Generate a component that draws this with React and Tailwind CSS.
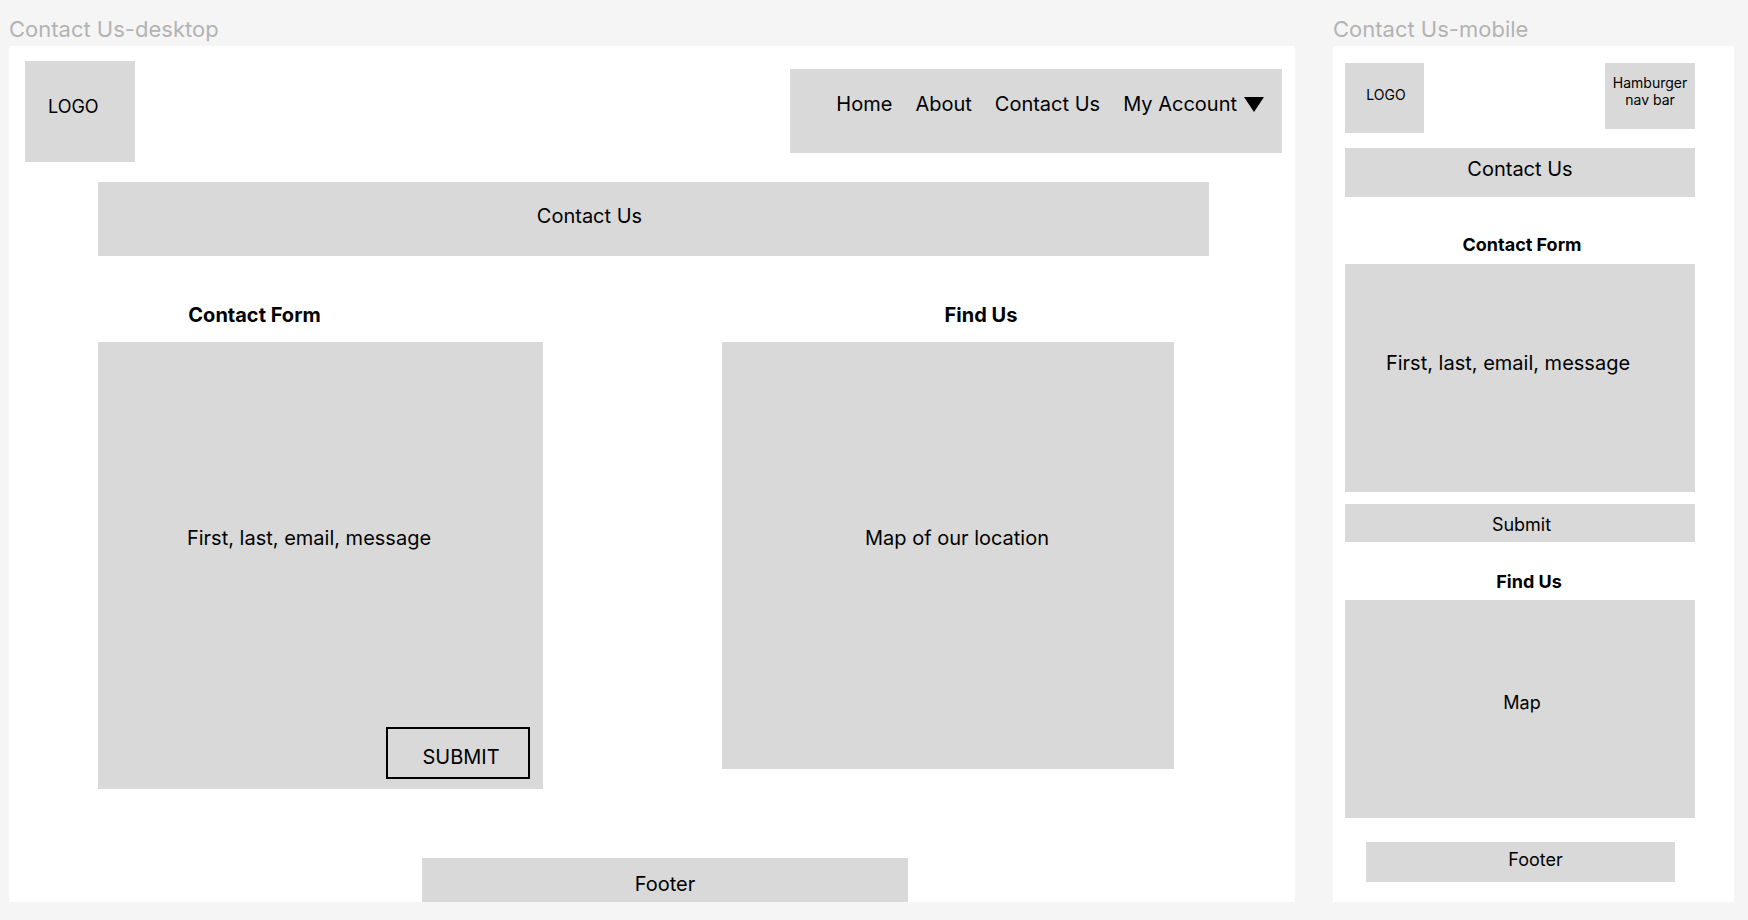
function FrameLabel({ children }) {
  return <p className="pt-[17px] text-[22px] leading-6 whitespace-nowrap text-[#b3b3b3]">{children}</p>;
}

function Desktop() {
  return (
    <section className="min-w-0 flex-1">
      <FrameLabel>Contact Us-desktop</FrameLabel>
      <div className="mt-[5px] bg-white text-xl leading-6">
        <header className="flex items-start justify-between pt-[15px] pr-[13px] pl-4">
          <div className="h-[101px] w-[110px] bg-[#d9d9d9] pt-[34px] pl-[23px] text-lg leading-6">LOGO</div>
          <nav className="mt-2 flex h-[84px] items-start gap-[23px] bg-[#d9d9d9] pt-[23px] pr-[18px] pl-[46px] whitespace-nowrap">
            <a href="#home">Home</a>
            <a href="#about">About</a>
            <a href="#contact">Contact Us</a>
            <button type="button" className="flex items-center gap-[7px]">
              My Account
              <svg className="h-[15px] w-5" viewBox="0 0 20 15" aria-hidden="true">
                <path d="M0 0H20L10 15Z" fill="#000" />
              </svg>
            </button>
          </nav>
        </header>
        <h1 className="mt-5 mr-[86px] ml-[89px] h-[74px] bg-[#d9d9d9] pt-[22px] pr-32 text-center">Contact Us</h1>
        <div className="mt-[47px] mr-[121px] ml-[89px] grid grid-cols-[445fr_452fr] items-start gap-x-[179px]">
          <div>
            <h2 className="pr-[132px] text-center font-bold">Contact Form</h2>
            <div className="mt-[15px] flex h-[447px] flex-col items-end justify-between bg-[#d9d9d9] pt-[184px] pr-[13px] pb-2.5">
              <p className="w-full pr-2.5 text-center">First, last, email, message</p>
              <button type="submit" className="h-[52px] w-36 border-2 border-black pt-2 pl-1.5">SUBMIT</button>
            </div>
          </div>
          <div>
            <h2 className="pl-[66px] text-center font-bold">Find Us</h2>
            <div className="mt-[15px] h-[427px] bg-[#d9d9d9] pt-[184px] pl-[18px] text-center">Map of our location</div>
          </div>
        </div>
        <footer className="mt-[69px] mr-[387px] ml-[413px] h-11 bg-[#d9d9d9] pt-3.5 text-center">Footer</footer>
      </div>
    </section>
  );
}

function Mobile() {
  return (
    <section className="w-[401px] shrink-0">
      <FrameLabel>Contact Us-mobile</FrameLabel>
      <div className="mt-[5px] bg-white pt-[17px] pr-[39px] pb-5 pl-3 text-lg leading-6">
        <header className="flex items-start justify-between text-sm leading-[17px]">
          <div className="h-[70px] w-[79px] bg-[#d9d9d9] pt-[23px] pl-[3px] text-center">LOGO</div>
          <button type="button" className="flex h-[66px] w-[90px] justify-center bg-[#d9d9d9] pt-[11px]">
            <span>
              Hamburger
              <br />
              nav bar
            </span>
          </button>
        </header>
        <h1 className="mt-[15px] h-[49px] bg-[#d9d9d9] pt-[9px] text-center text-xl leading-6">Contact Us</h1>
        <h2 className="mt-9 pl-1 text-center font-bold">Contact Form</h2>
        <div className="mt-[7px] h-[228px] bg-[#d9d9d9] pt-[87px] pr-6 text-center text-xl leading-6">
          First, last, email, message
        </div>
        <button type="submit" className="mt-3 block h-[38px] w-full bg-[#d9d9d9] pt-[3px] pl-[3px]">Submit</button>
        <h2 className="mt-7 pl-[18px] text-center font-bold">Find Us</h2>
        <div className="mt-1.5 h-[218px] bg-[#d9d9d9] pt-[91px] pl-1 text-center">Map</div>
        <footer className="mr-5 ml-[21px] mt-6 h-10 bg-[#d9d9d9] pt-1.5 pl-[30px] text-center">Footer</footer>
      </div>
    </section>
  );
}

export default function App() {
  return (
    <main className="flex min-h-screen items-start gap-[38px] bg-[#f5f5f5] pr-3.5 pb-4 pl-[9px] font-['Inter',sans-serif] text-black">
      <Desktop />
      <Mobile />
    </main>
  );
}
